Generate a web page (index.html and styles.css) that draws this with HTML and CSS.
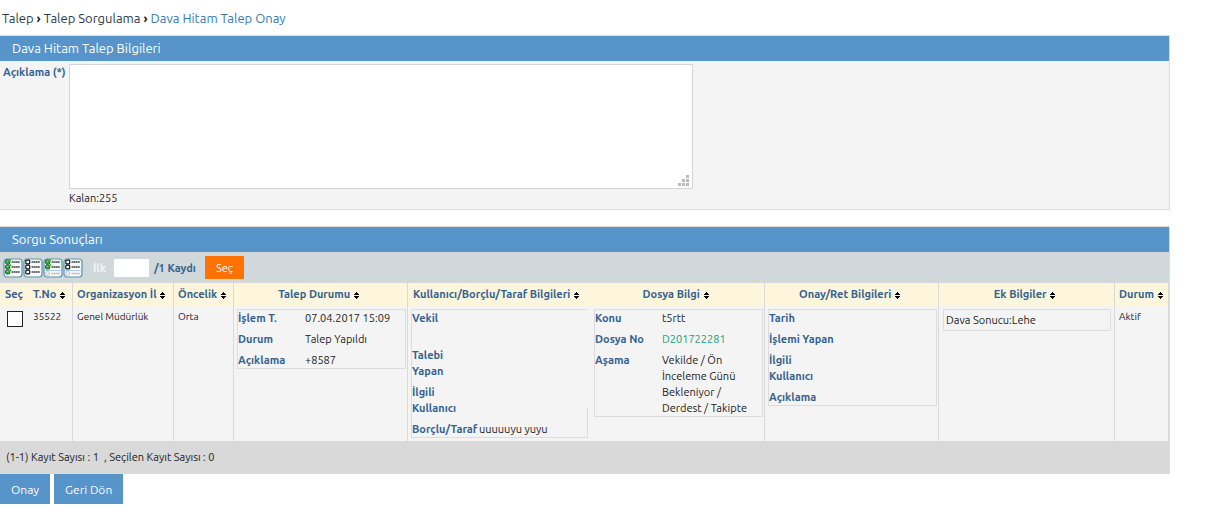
FILE: index.html
```html
<!DOCTYPE html>
<html lang="tr">
<head>
  <meta charset="UTF-8" />
  <meta name="viewport" content="width=device-width, initial-scale=1.0" />
  <title>Dava Hitam Talep Onay</title>
  <link rel="stylesheet" href="styles.css">
</head>
<body>
  <!-- Ortak ikonlar -->
  <svg class="sprite" aria-hidden="true">
    <symbol id="sort" viewBox="0 0 5 7">
      <path d="M2 0h1v1h1v1h1v1H0V2h1V1h1zM0 4h5v1H4v1H3v1H2V6H1V5H0z" />
    </symbol>
    <symbol id="frame" viewBox="0 0 20 20">
      <rect x="1" y="1" width="18" height="18" rx="3" fill="#f4f9fb" stroke="#5b93ac" stroke-width="1.2" />
    </symbol>
    <symbol id="on" viewBox="0 0 16 6">
      <rect x="0.7" y="1.1" width="4" height="3.8" rx="1" fill="#fff" stroke="#111" stroke-width="1" />
      <path d="M1 2.4l1.7 1.7L5.8 .5" fill="none" stroke="#0db80d" stroke-width="1.5" />
      <path d="M6.6 3h8.4" stroke="#444" stroke-width="1.6" stroke-dasharray="1.8 .3" />
    </symbol>
    <symbol id="off" viewBox="0 0 16 6">
      <rect x="0.8" y="1.1" width="3.9" height="3.8" rx="1" fill="#fff" stroke="#111" stroke-width="1.2" />
      <path d="M6.6 3h8.4" stroke="#444" stroke-width="1.6" stroke-dasharray="1.8 .3" />
    </symbol>
    <symbol id="dim" viewBox="0 0 16 6">
      <path d="M0 .5h16" stroke="#a9cbe6" />
      <rect x="0.8" y="1.8" width="3.6" height="3.2" rx="1" fill="#fff" stroke="#aaa" stroke-width=".8" />
      <path d="M6.6 3.5h8.4" stroke="#bbb" stroke-width="1.4" stroke-dasharray="1.8 .3" />
    </symbol>
  </svg>

  <nav class="breadcrumb">
    <a href="#">Talep</a> <b>&rsaquo;</b> <a href="#">Talep Sorgulama</a> <b>&rsaquo;</b> <a href="#" class="current">Dava Hitam Talep Onay</a>
  </nav>

  <section class="panel">
    <h2>Dava Hitam Talep Bilgileri</h2>
    <div class="form-row">
      <label for="aciklama">Açıklama (*)</label>
      <div class="field">
        <div class="textarea-wrap">
          <textarea id="aciklama" maxlength="255"></textarea>
          <svg class="grip" viewBox="0 0 11 11" aria-hidden="true">
            <path d="M8 0h3v3H8zM4 4h3v3H4zM8 4h3v3H8zM0 8h3v3H0zM4 8h3v3H4zM8 8h3v3H8z" />
          </svg>
        </div>
        <span>Kalan:255</span>
      </div>
    </div>
  </section>

  <section class="panel">
    <h2>Sorgu Sonuçları</h2>
    <div class="toolbar">
      <div class="icons">
        <button type="button" aria-label="Tümünü seç"><svg viewBox="0 0 20 20"><use href="#frame" /><use href="#on" x="2" y="1" width="16" height="6" /><use href="#on" x="2" y="6" width="16" height="6" /><use href="#on" x="2" y="11" width="16" height="6" /></svg></button>
        <button type="button" aria-label="Seçimi kaldır"><svg viewBox="0 0 20 20"><use href="#frame" /><use href="#off" x="2" y="1" width="16" height="6" /><use href="#off" x="2" y="6" width="16" height="6" /><use href="#off" x="2" y="11" width="16" height="6" /></svg></button>
        <button type="button" aria-label="Sayfadakileri seç"><svg viewBox="0 0 20 20"><use href="#frame" /><use href="#on" x="2" y="1" width="16" height="6" /><use href="#on" x="2" y="6" width="16" height="6" /><use href="#dim" x="2" y="12" width="16" height="6" /></svg></button>
        <button type="button" aria-label="Sayfadakileri kaldır"><svg viewBox="0 0 20 20"><use href="#frame" /><use href="#off" x="2" y="1" width="16" height="6" /><use href="#off" x="2" y="6" width="16" height="6" /><use href="#dim" x="2" y="12" width="16" height="6" /></svg></button>
      </div>
      <label for="ilk" class="first">İlk</label>
      <input type="text" id="ilk">
      <span class="total">/1 Kaydı</span>
      <button type="button" class="btn-orange">Seç</button>
    </div>

    <table class="results">
      <colgroup>
        <col class="c-sec"><col class="c-no"><col class="c-org"><col class="c-onc"><col class="c-detail"><col class="c-kul"><col class="c-detail"><col class="c-detail"><col class="c-ek"><col class="c-durum">
      </colgroup>
      <thead>
        <tr>
          <th class="open wide">Seç</th>
          <th>T.No <svg class="sort"><use href="#sort" /></svg></th>
          <th>Organizasyon İl <svg class="sort"><use href="#sort" /></svg></th>
          <th>Öncelik <svg class="sort"><use href="#sort" /></svg></th>
          <th class="mid">Talep Durumu <svg class="sort"><use href="#sort" /></svg></th>
          <th class="open wide">Kullanıcı/Borçlu/Taraf Bilgileri <svg class="sort"><use href="#sort" /></svg></th>
          <th class="mid">Dosya Bilgi <svg class="sort"><use href="#sort" /></svg></th>
          <th class="mid">Onay/Ret Bilgileri <svg class="sort"><use href="#sort" /></svg></th>
          <th class="mid">Ek Bilgiler <svg class="sort"><use href="#sort" /></svg></th>
          <th>Durum <svg class="sort"><use href="#sort" /></svg></th>
        </tr>
      </thead>
      <tbody>
        <tr>
          <td class="open"><input type="checkbox" aria-label="Seç"></td>
          <td>35522</td>
          <td>Genel Müdürlük</td>
          <td>Orta</td>
          <td class="nest">
            <dl class="detail">
              <dt>İşlem T.</dt><dd>07.04.2017 15:09</dd>
              <dt>Durum</dt><dd>Talep Yapıldı</dd>
              <dt>Açıklama</dt><dd>+8587</dd>
            </dl>
          </td>
          <td class="nest open">
            <dl class="detail parties">
              <dt class="tall">Vekil</dt><dd></dd>
              <dt>Talebi<br>Yapan</dt><dd></dd>
              <dt>İlgili<br>Kullanıcı</dt><dd></dd>
              <dt>Borçlu/Taraf</dt><dd>uuuuuyu yuyu</dd>
            </dl>
          </td>
          <td class="nest">
            <dl class="detail">
              <dt>Konu</dt><dd>t5rtt</dd>
              <dt>Dosya No</dt><dd><a href="#">D201722281</a></dd>
              <dt>Aşama</dt><dd>Vekilde / Ön İnceleme Günü Bekleniyor / Derdest / Takipte</dd>
            </dl>
          </td>
          <td class="nest">
            <dl class="detail">
              <dt>Tarih</dt><dd></dd>
              <dt>İşlemi Yapan</dt><dd></dd>
              <dt>İlgili<br>Kullanıcı</dt><dd></dd>
              <dt>Açıklama</dt><dd></dd>
            </dl>
          </td>
          <td class="nest"><div class="extra">Dava Sonucu:Lehe</div></td>
          <td>Aktif</td>
        </tr>
      </tbody>
    </table>
    <div class="summary">(1-1) Kayıt Sayısı : 1 &nbsp;, Seçilen Kayıt Sayısı : 0</div>
  </section>

  <div class="actions">
    <button type="button">Onay</button>
    <button type="button">Geri Dön</button>
  </div>
</body>
</html>
```
FILE: styles.css
```css
* {
  box-sizing: border-box;
}
body {
  font-family: Ubuntu, "Noto Sans", sans-serif;
  font-size: 11px;
  line-height: 16px;
  margin: 0;
  padding: 9px 51px 0 0;
  background: #fff;
  color: #222;
}
button, input, textarea {
  font-family: inherit;
  font-size: inherit;
}
.sprite {
  display: none;
}
.breadcrumb {
  padding-left: 2px;
  margin-bottom: 8px;
  font-size: 13px;
  line-height: 18px;
}
.breadcrumb a {
  color: #2b3a4a;
  text-decoration: none;
}
.breadcrumb a.current {
  color: #337ab7;
}
.panel {
  border: 1px solid #ddd;
  border-left: 0;
  background: #f4f4f4;
  margin-bottom: 16px;
}
.panel h2 {
  margin: 0;
  padding-left: 12px;
  background: #5694ca;
  color: #fff;
  font-size: 13px;
  font-weight: normal;
  line-height: 25px;
}
.form-row {
  display: flex;
  padding: 3px 0 2px 3px;
}
.form-row label {
  flex: 0 0 66px;
  color: #336290;
  font-weight: bold;
  white-space: nowrap;
}
.field {
  flex: 1;
}
.textarea-wrap {
  position: relative;
  max-width: 624px;
  height: 125px;
}
.textarea-wrap textarea {
  display: block;
  width: 100%;
  height: 100%;
  border: 1px solid #d5d5d5;
  background: #fff;
  resize: none;
}
.grip {
  position: absolute;
  right: 4px;
  bottom: 3px;
  width: 11px;
  height: 11px;
  fill: #bbb;
}
.field span {
  display: block;
  line-height: 18px;
}
.toolbar {
  display: flex;
  align-items: center;
  height: 31px;
  padding-left: 3px;
  background: #d0d8dc;
}
.icons {
  display: flex;
}
.icons button {
  width: 20px;
  height: 20px;
  padding: 0;
  border: 0;
  background: none;
}
.icons svg {
  display: block;
  width: 20px;
  height: 20px;
}
.first {
  width: 31px;
  padding-left: 10px;
  color: #f4f4f4;
  font-weight: bold;
}
.toolbar input {
  width: 35px;
  height: 18px;
  border: 0;
  background: #fff;
}
.total {
  width: 56px;
  padding-left: 5px;
  color: #336290;
  font-weight: bold;
  white-space: nowrap;
}
.btn-orange {
  width: 39px;
  height: 23px;
  padding: 0;
  border: 0;
  background: #fd7200;
  color: #fff;
}
.results {
  width: 100%;
  table-layout: fixed;
  border-collapse: separate;
  border-spacing: 0;
}
.c-sec { width: 29px; }
.c-no { width: 44px; }
.c-org { width: 101px; }
.c-onc { width: 60px; }
.c-detail { width: 174px; }
.c-kul { width: 183px; }
.c-ek { width: 176px; }
.c-durum { width: 54px; }
.results th, .results td {
  border-right: 1px solid #d9d9d9;
  text-align: left;
  vertical-align: top;
}
.results th {
  padding: 3px 0 4px 4px;
  background: #fdf5dc;
  color: #336290;
  white-space: nowrap;
}
.results th.mid {
  padding: 3px 4px 4px 0;
  text-align: center;
}
.results .open {
  border-right: 0;
}
.results th.wide {
  padding-left: 5px;
}
.sort {
  width: 5px;
  height: 7px;
  margin-left: 1px;
  vertical-align: -1px;
}
.results td {
  height: 135px;
  padding: 3px 0 0 4px;
  font-size: 10px;
}
.results td.nest {
  padding: 3px 1px 0 3px;
  font-size: 11px;
}
.results input[type="checkbox"] {
  appearance: none;
  display: block;
  width: 16px;
  height: 16px;
  margin: 2px 0 0 3px;
  border: 1px solid #222;
  background: #fff;
}
.detail {
  display: grid;
  grid-template-columns: 67px 1fr;
  row-gap: 5px;
  margin: 0;
  border: 1px solid #ddd;
}
.detail dt {
  color: #336290;
  font-weight: bold;
  white-space: nowrap;
}
.detail dd {
  margin: 0;
  padding-right: 8px;
}
.detail .tall {
  height: 32px;
}
.detail a {
  color: #169f7e;
  text-decoration: none;
}
/* sağ çizgi sadece son satırda */
.parties {
  margin-right: 2px;
  border-right: 0;
  background: linear-gradient(#ddd, #ddd) right bottom / 1px 30px no-repeat;
}
.extra {
  margin: 0 2px 0 1px;
  padding: 2px;
  border: 1px solid #ddd;
}
.summary {
  padding-left: 6px;
  background: #d9d9d9;
  line-height: 32px;
}
.actions {
  display: flex;
  gap: 4px;
  margin-top: -16px;
}
.actions button {
  height: 30px;
  padding: 0 11px;
  border: 0;
  background: #5694ca;
  color: #fff;
  font-size: 12px;
}
```
